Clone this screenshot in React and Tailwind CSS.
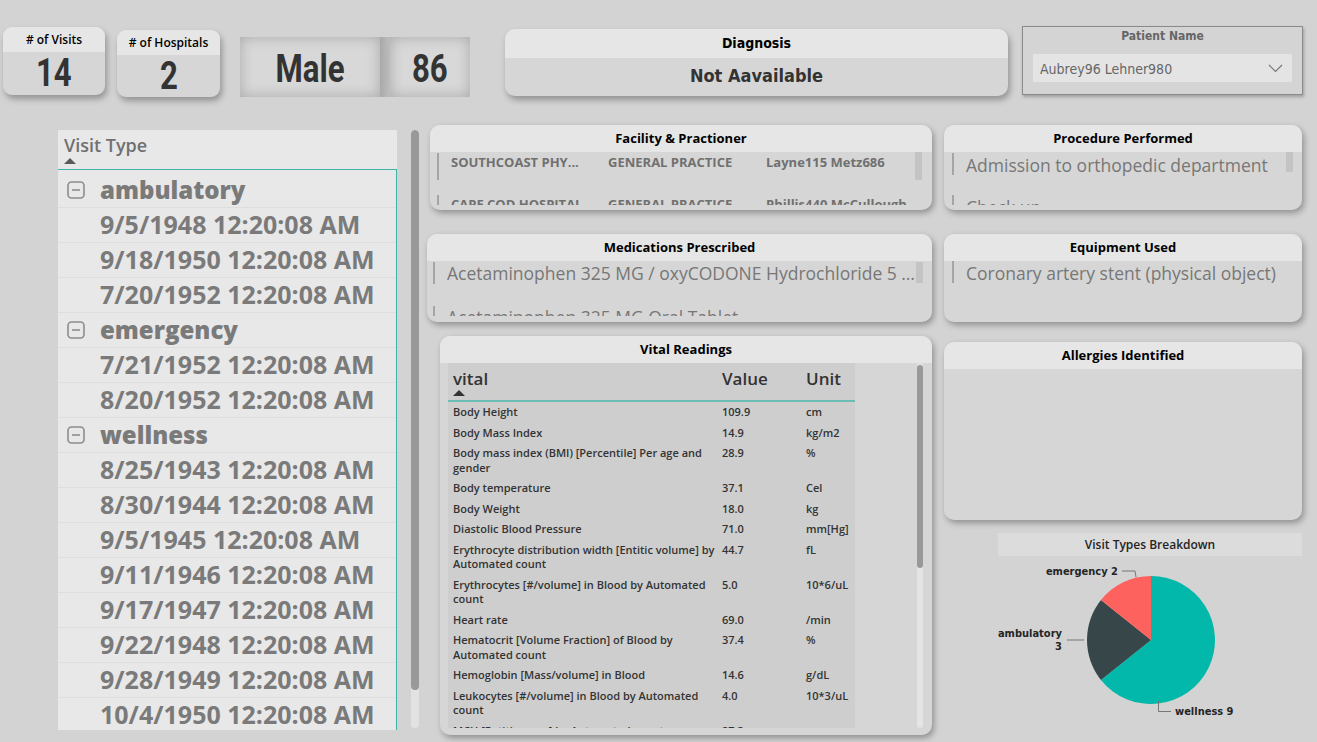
import React from "react";

const DIN = "[font-family:'DejaVu_Sans_Condensed','Roboto',sans-serif]";

const groups = [
  {
    name: "ambulatory",
    dates: ["9/5/1948 12:20:08 AM", "9/18/1950 12:20:08 AM", "7/20/1952 12:20:08 AM"],
  },
  { name: "emergency", dates: ["7/21/1952 12:20:08 AM", "8/20/1952 12:20:08 AM"] },
  {
    name: "wellness",
    dates: [
      "8/25/1943 12:20:08 AM",
      "8/30/1944 12:20:08 AM",
      "9/5/1945 12:20:08 AM",
      "9/11/1946 12:20:08 AM",
      "9/17/1947 12:20:08 AM",
      "9/22/1948 12:20:08 AM",
      "9/28/1949 12:20:08 AM",
      "10/4/1950 12:20:08 AM",
    ],
  },
];

const vitals = [
  { name: ["Body Height"], value: "109.9", unit: "cm" },
  { name: ["Body Mass Index"], value: "14.9", unit: "kg/m2" },
  { name: ["Body mass index (BMI) [Percentile] Per age and", "gender"], value: "28.9", unit: "%" },
  { name: ["Body temperature"], value: "37.1", unit: "Cel" },
  { name: ["Body Weight"], value: "18.0", unit: "kg" },
  { name: ["Diastolic Blood Pressure"], value: "71.0", unit: "mm[Hg]" },
  { name: ["Erythrocyte distribution width [Entitic volume] by", "Automated count"], value: "44.7", unit: "fL" },
  { name: ["Erythrocytes [#/volume] in Blood by Automated", "count"], value: "5.0", unit: "10*6/uL" },
  { name: ["Heart rate"], value: "69.0", unit: "/min" },
  { name: ["Hematocrit [Volume Fraction] of Blood by", "Automated count"], value: "37.4", unit: "%" },
  { name: ["Hemoglobin [Mass/volume] in Blood"], value: "14.6", unit: "g/dL" },
  { name: ["Leukocytes [#/volume] in Blood by Automated", "count"], value: "4.0", unit: "10*3/uL" },
  { name: ["MCH [Entitic mass] by Automated count"], value: "27.3", unit: "pg" },
];

function Card({ title, className, children }) {
  return (
    <div
      className={`rounded-[10px] bg-[#d6d6d6] shadow-[2px_3px_6px_rgba(0,0,0,0.32)] overflow-hidden flex flex-col ${className}`}
    >
      <div className="h-[27px] shrink-0 bg-[#e6e6e6] flex items-center justify-center text-[13px] font-bold text-black">
        {title}
      </div>
      {children}
    </div>
  );
}

// big KPI number, condensed like the DIN face in the report
function BigValue({ children }) {
  return (
    <span className="inline-block scale-x-[0.82] text-[38px] leading-none font-bold text-[#333] [font-family:Roboto,sans-serif]">
      {children}
    </span>
  );
}

function SortUp({ color }) {
  return (
    <svg width="12" height="6" viewBox="0 0 12 6">
      <path d="M0 6 L6 0 L12 6 Z" fill={color} />
    </svg>
  );
}

function MinusBox() {
  return (
    <svg width="18" height="18" viewBox="0 0 18 18">
      <rect x="1" y="1" width="16" height="16" rx="3.5" fill="none" stroke="#8c8c8c" strokeWidth="1.6" />
      <path d="M5 9 H13" stroke="#8c8c8c" strokeWidth="1.6" />
    </svg>
  );
}

function VisitTypeList() {
  return (
    <div className="mt-[5px] w-[339px] h-[600px] bg-[#e8e8e8] flex flex-col overflow-hidden">
      <div className="h-[40px] shrink-0 pl-[6px] pt-[4px] border-b-[1.5px] border-[#3fb3a6]">
        <div className="text-[18px] leading-[22px] font-semibold text-[#707070]">Visit Type</div>
        <div className="mt-[2px]">
          <SortUp color="#5a5a5a" />
        </div>
      </div>
      <div className="flex-1 pt-[3px] border-r-[1.5px] border-[#3fb3a6] overflow-hidden">
        {groups.map((g) => (
          <div key={g.name}>
            <div className="h-[35px] flex items-center pl-[9px] gap-[15px] border-b border-[#dedede]">
              <MinusBox />
              <span className="text-[24px] font-extrabold text-[#7a7a7a] leading-none pb-[1px]">{g.name}</span>
            </div>
            {g.dates.map((d) => (
              <div
                key={d}
                className="h-[35px] flex items-center pl-[42px] border-b border-[#dedede] text-[25px] font-bold text-[#7a7a7a] whitespace-nowrap"
              >
                {d}
              </div>
            ))}
          </div>
        ))}
      </div>
    </div>
  );
}

function ListRow({ children, barClass, rowClass }) {
  return (
    <div className={`flex items-start shrink-0 ${rowClass}`}>
      <div className={`w-[2px] bg-[#a5a5a5] ${barClass}`} />
      {children}
    </div>
  );
}

function PieChart() {
  return (
    <svg width="304" height="180" viewBox="0 0 304 180" className={DIN}>
      <path d="M153 84 L153 20 A64 64 0 1 1 102.96 123.9 Z" fill="#01b8aa" />
      <path d="M153 84 L102.96 123.9 A64 64 0 0 1 102.96 44.1 Z" fill="#374649" />
      <path d="M153 84 L102.96 44.1 A64 64 0 0 1 153 20 Z" fill="#fd625e" />
      <path d="M124 15 H137 L138 21" fill="none" stroke="#777" strokeWidth="1" />
      <path d="M69 84 H86" fill="none" stroke="#777" strokeWidth="1" />
      <path d="M160.5 145 V155.5 H173" fill="none" stroke="#777" strokeWidth="1" />
      <text x="120" y="19" textAnchor="end" fontSize="11" fontWeight="600" fill="#252525">
        emergency 2
      </text>
      <text x="64" y="81" textAnchor="end" fontSize="11" fontWeight="600" fill="#252525">
        ambulatory
      </text>
      <text x="64" y="94" textAnchor="end" fontSize="11" fontWeight="600" fill="#252525">
        3
      </text>
      <text x="177" y="159" fontSize="11" fontWeight="600" fill="#252525">
        wellness 9
      </text>
    </svg>
  );
}

export default function App() {
  return (
    <div className="w-[1317px] h-[742px] bg-[#d3d3d3] overflow-hidden flex flex-col [font-family:'Open_Sans','Noto_Sans',sans-serif]">
      {/* top row */}
      <div className="h-[99px] shrink-0 flex items-start pt-[26px] pl-[3px]">
        <div className="mt-[1px] w-[102px] h-[68px] rounded-[9px] bg-[#d6d6d6] shadow-[2px_4px_6px_rgba(0,0,0,0.3)] overflow-hidden flex flex-col">
          <div className="h-[25px] shrink-0 bg-[#e6e6e6] flex items-center justify-center text-[12px] font-semibold text-black">
            # of Visits
          </div>
          <div className="flex-1 flex items-center justify-center pb-[1px]">
            <BigValue>14</BigValue>
          </div>
        </div>

        <div className="ml-[12px] mt-[4px] w-[103px] h-[67px] rounded-[9px] bg-[#d6d6d6] shadow-[2px_4px_6px_rgba(0,0,0,0.3)] overflow-hidden flex flex-col">
          <div className="h-[25px] shrink-0 bg-[#e6e6e6] flex items-center justify-center text-[12px] font-semibold text-black">
            # of Hospitals
          </div>
          <div className="flex-1 flex items-center justify-center">
            <BigValue>2</BigValue>
          </div>
        </div>

        <div className="ml-[20px] mt-[11px] h-[60px] flex">
          <div className="w-[140px] h-full bg-[#d8d8d8] shadow-[inset_0_0_14px_rgba(0,0,0,0.22)] flex items-center justify-center pt-[4px]">
            <BigValue>Male</BigValue>
          </div>
          <div className="w-[10px] h-full bg-gradient-to-r from-[#a9a9a9] to-[#bdbdbd]" />
          <div className="w-[80px] h-full bg-[#d8d8d8] shadow-[inset_0_0_14px_rgba(0,0,0,0.22)] flex items-center justify-center pt-[4px]">
            <BigValue>86</BigValue>
          </div>
        </div>

        <div className="ml-[35px] mt-[3px] w-[503px] h-[67px] rounded-[10px] bg-[#d6d6d6] shadow-[2px_4px_6px_rgba(0,0,0,0.3)] overflow-hidden flex flex-col">
          <div className={`h-[29px] shrink-0 bg-[#e6e6e6] flex items-center justify-center text-[14px] font-bold text-black ${DIN}`}>
            Diagnosis
          </div>
          <div className={`flex-1 flex items-center justify-center pb-[3px] text-[18px] font-bold text-[#333] ${DIN}`}>
            Not Aavailable
          </div>
        </div>

        <div className="ml-[14px] w-[281px] h-[69px] border border-[#8a8a8a] bg-[#d4d4d4] shadow-[1px_2px_3px_rgba(0,0,0,0.25)] flex flex-col">
          <div className={`text-center text-[12px] leading-[16px] pt-[1px] font-semibold text-[#666] ${DIN}`}>Patient Name</div>
          <div className="mx-[10px] mt-[10px] h-[28px] bg-[#e4e4e4] pl-[7px] pr-[9px] flex items-center justify-between">
            <span className={`text-[14px] text-[#666] pt-[2px] ${DIN}`}>Aubrey96 Lehner980</span>
            <svg width="15" height="9" viewBox="0 0 15 9">
              <path d="M1 1 L7.5 7.5 L14 1" fill="none" stroke="#777" strokeWidth="1.2" />
            </svg>
          </div>
        </div>
      </div>

      {/* main row */}
      <div className="mt-[26px] flex items-start pl-[58px]">
        <VisitTypeList />

        <div className="ml-[14px] mt-[5px] w-[8px] h-[598px] rounded-full bg-[#e2e2e2] overflow-hidden">
          <div className="h-[560px] w-full rounded-full bg-[#999]" />
        </div>

        {/* middle column */}
        <div className="ml-[8px] w-[505px] flex flex-col">
          <Card title="Facility & Practioner" className="ml-[3px] w-[502px] h-[85px] pb-[5px]">
            <div className="flex-1 flex overflow-hidden pl-[7px]">
              <div className="flex-1 flex flex-col">
                {[
                  ["SOUTHCOAST PHY...", "GENERAL PRACTICE", "Layne115 Metz686"],
                  ["CAPE COD HOSPITAL", "GENERAL PRACTICE", "Phillis440 McCullough"],
                ].map((r) => (
                  <ListRow key={r[2]} rowClass="h-[42px]" barClass="h-[27px] mt-[1px]">
                    <div className="flex pl-[12px] pt-[1px] text-[13px] leading-[18px] font-bold text-[#707070] whitespace-nowrap">
                      <span className="w-[157px]">{r[0]}</span>
                      <span className="w-[158px]">{r[1]}</span>
                      <span>{r[2]}</span>
                    </div>
                  </ListRow>
                ))}
              </div>
              <div className="w-[7px] h-[28px] bg-[#c4c4c4] mr-[10px]" />
            </div>
          </Card>

          <Card title="Medications Prescribed" className="mt-[24px] w-[505px] h-[88px] pb-[6px]">
            <div className="flex-1 flex overflow-hidden pl-[6px]">
              <div className="flex-1 min-w-0 flex flex-col">
                {[
                  "Acetaminophen 325 MG / oxyCODONE Hydrochloride 5 MG Oral Tablet",
                  "Acetaminophen 325 MG Oral Tablet",
                ].map((m) => (
                  <ListRow key={m} rowClass="h-[44px]" barClass="h-[22px] mt-[1px] shrink-0">
                    <div className="min-w-0 flex-1 pl-[12px] text-[17.5px] leading-[24px] text-[#777] whitespace-nowrap overflow-hidden text-ellipsis">
                      {m}
                    </div>
                  </ListRow>
                ))}
              </div>
              <div className="w-[7px] h-[21px] mt-[1px] bg-[#c4c4c4] mr-[9px]" />
            </div>
          </Card>

          <Card title="Vital Readings" className="mt-[14px] ml-[13px] w-[492px] h-[399px] pb-[7px]">
            <div className="flex-1 flex overflow-hidden">
              <div className="ml-[8px] w-[407px] bg-[#cecece] flex flex-col overflow-hidden">
                <div className="h-[39px] shrink-0 flex border-b-2 border-[#6cbcb4] text-[17px] leading-[20px] font-semibold text-[#333]">
                  <div className="w-[274px] pl-[5px] pt-[6px]">
                    <div>vital</div>
                    <div className="mt-[1px]">
                      <SortUp color="#333" />
                    </div>
                  </div>
                  <div className="w-[84px] pt-[6px]">Value</div>
                  <div className="pt-[6px]">Unit</div>
                </div>
                {vitals.map((v) => (
                  <div
                    key={v.name[0]}
                    className="flex py-[3px] text-[11px] leading-[14.5px] font-semibold text-[#333] whitespace-nowrap shrink-0"
                  >
                    <div className="w-[274px] pl-[5px]">
                      {v.name.map((l) => (
                        <div key={l}>{l}</div>
                      ))}
                    </div>
                    <div className="w-[84px]">{v.value}</div>
                    <div>{v.unit}</div>
                  </div>
                ))}
              </div>
              <div className="ml-[62px] w-[6px] h-full rounded-full bg-[#e4e4e4] overflow-hidden">
                <div className="mt-[2px] h-[203px] rounded-full bg-[#999]" />
              </div>
            </div>
          </Card>
        </div>

        {/* right column */}
        <div className="ml-[12px] w-[358px] flex flex-col">
          <Card title="Procedure Performed" className="w-[358px] h-[85px] pb-[5px]">
            <div className="flex-1 flex overflow-hidden pl-[8px]">
              <div className="flex-1 flex flex-col">
                {["Admission to orthopedic department", "Check up"].map((p) => (
                  <ListRow key={p} rowClass="h-[42px]" barClass="h-[22px] mt-[1px] shrink-0">
                    <div className="pl-[12px] pt-[1px] text-[17.5px] leading-[24px] text-[#777] whitespace-nowrap">{p}</div>
                  </ListRow>
                ))}
              </div>
              <div className="w-[7px] h-[20px] bg-[#c4c4c4] mr-[9px]" />
            </div>
          </Card>

          <Card title="Equipment Used" className="mt-[24px] w-[358px] h-[88px]">
            <div className="flex-1 pl-[8px]">
              <ListRow rowClass="h-[40px]" barClass="h-[22px] shrink-0">
                <div className="pl-[12px] text-[17.5px] leading-[24px] text-[#777] whitespace-nowrap">
                  Coronary artery stent (physical object)
                </div>
              </ListRow>
            </div>
          </Card>

          <Card title="Allergies Identified" className="mt-[20px] w-[358px] h-[178px]">
            <div className="flex-1" />
          </Card>

          <div className="mt-[13px] ml-[54px] w-[304px] h-[23px] bg-[#dcdcdc] flex items-center justify-center text-[12px] font-semibold text-[#252525]">
            Visit Types Breakdown
          </div>
          <div className="ml-[54px]">
            <PieChart />
          </div>
        </div>
      </div>
    </div>
  );
}
